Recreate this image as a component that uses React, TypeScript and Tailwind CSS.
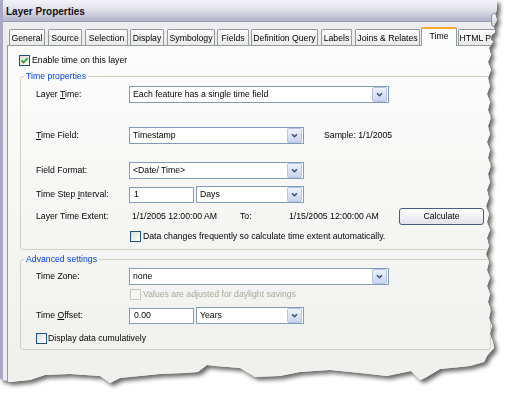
import clsx from "clsx";

const tabs = [
  { label: "General", cls: "ml-0 w-[36px]" },
  { label: "Source", cls: "ml-[3px] w-[34px]" },
  { label: "Selection", cls: "ml-[3px] w-[43px]" },
  { label: "Display", cls: "ml-[2px] w-[34px]" },
  { label: "Symbology", cls: "ml-[3px] w-[48px]" },
  { label: "Fields", cls: "ml-[2px] w-[32px]" },
  { label: "Definition Query", cls: "ml-[2px] w-[67px]" },
  { label: "Labels", cls: "ml-[3px] w-[31px]" },
  { label: "Joins & Relates", cls: "ml-[3px] w-[65px]" },
  { label: "Time", cls: "ml-px w-[36px]", active: true },
  { label: "HTML Popup", cls: "ml-px w-[54px]" },
];

function Chevron() {
  return (
    <span className="mr-px flex h-[15px] w-[15px] items-center justify-center rounded-[2px] border border-[#b5c3e3] bg-gradient-to-b from-[#eef2fc] to-[#c9d4ee]">
      <svg width="9" height="9" viewBox="0 0 9 9">
        <path d="M2 3.2 L4.5 5.7 L7 3.2" stroke="#3f4f70" strokeWidth="1.6" fill="none" />
      </svg>
    </span>
  );
}

function Select({ value, w }: { value: string; w: string }) {
  return (
    <div className={clsx("flex h-[17px] shrink-0 items-center border border-[#7f9db9] bg-white", w)}>
      <span className="flex-1 truncate pl-[3px]">{value}</span>
      <Chevron />
    </div>
  );
}

function Input({ value }: { value: string }) {
  return (
    <div className="flex h-[16px] w-[65px] shrink-0 items-center border border-[#7f9db9] bg-white pl-[4px]">
      {value}
    </div>
  );
}

function Check({ checked, disabled }: { checked?: boolean; disabled?: boolean }) {
  return (
    <span
      className={clsx(
        "flex h-[11px] w-[11px] shrink-0 items-center justify-center border",
        disabled ? "border-[#c9c7ba] bg-[#f7f7f4]" : "border-[#1c5180] bg-gradient-to-br from-[#dcdcd7] to-white"
      )}
    >
      {checked && (
        <svg width="9" height="9" viewBox="0 0 9 9">
          <path d="M1.6 4.4 L3.6 6.5 L7.6 2.2" stroke="#21a121" strokeWidth="1.7" fill="none" />
        </svg>
      )}
    </span>
  );
}

function Label({ children }: { children: React.ReactNode }) {
  return <span className="w-[93px] shrink-0">{children}</span>;
}

function U({ children }: { children: React.ReactNode }) {
  return <span className="underline underline-offset-[1px]">{children}</span>;
}

function Group({ title, className, children }: { title: string; className?: string; children: React.ReactNode }) {
  return (
    <fieldset className={clsx("ml-[12px] w-[471px] rounded-[3px] border border-[#d0d0bf]", className)}>
      <legend className="ml-[3px] h-[11px] px-[2px] leading-[11px] text-[#0046d5]">{title}</legend>
      <div className="pl-[15px]">{children}</div>
    </fieldset>
  );
}

export default function App() {
  return (
    <div className="h-[395px] w-[509px] overflow-hidden bg-white font-['Liberation_Sans',Arial,sans-serif] text-[8.7px] leading-none text-black">
      <div className="[filter:drop-shadow(3px_3px_2px_rgba(0,0,0,0.6))]">
        <div className="relative flex h-[392px] w-[505px] flex-col border-l-[3px] border-[#a9a9c5] bg-[#ededf0] [clip-path:polygon(0_0,497px_0,497px_10px,495px_14px,497px_20px,494px_26px,495px_32px,491px_36px,493px_42px,489px_48px,491px_55px,488px_62px,491px_70px,488px_78px,490px_86px,487px_94px,490px_102px,488px_110px,491px_118px,488px_126px,490px_134px,487px_142px,490px_150px,488px_158px,491px_166px,488px_174px,490px_182px,487px_190px,489px_198px,486px_206px,489px_214px,487px_222px,490px_230px,487px_238px,489px_246px,486px_254px,489px_262px,487px_270px,490px_278px,487px_286px,490px_294px,488px_302px,491px_310px,489px_318px,492px_326px,490px_334px,493px_342px,494px_348px,487px_356px,484px_362px,470px_366px,461px_367px,440px_369px,425px_378px,420px_380px,411px_371px,387px_376px,360px_373px,330px_370px,300px_372px,280px_376px,255px_377px,240px_368px,215px_366px,207px_365px,198px_372px,185px_373px,160px_374px,140px_376px,120px_378px,110px_383px,100px_376px,70px_374px,45px_375px,30px_380px,10px_382px,0_379px)]">
          <div className="flex h-[22px] shrink-0 items-center rounded-tl-[3px] border-b border-[#9c9cb6] bg-gradient-to-b from-[#f3f3f8] via-[#dedee8] to-[#b3b3c9] pl-[3px] pt-[3px] text-[10px] font-bold text-[#111]">
            Layer Properties
          </div>
          <div className="absolute left-[488px] top-[13px] h-[14px] w-[12px] rounded-[3px] border border-[#8d8daa] bg-gradient-to-b from-[#f6f6fa] to-[#cfcfdc]" />
          <div className="flex flex-1 flex-col pl-[4px] pt-[5px]">
            <div className="ml-[2px] flex h-[18px] items-end">
              {tabs.map((t) => (
                <div
                  key={t.label}
                  className={clsx(
                    "flex shrink-0 items-center justify-center overflow-hidden whitespace-nowrap rounded-t-[2px] border-x border-[#919b9c]",
                    t.cls,
                    t.active
                      ? "relative z-10 -mb-px h-[19px] border-t-[2px] border-t-[#f4a93a] bg-[#fcfcfe] pb-[2px]"
                      : "h-[16px] border-t bg-gradient-to-b from-white to-[#e9e9e6] pt-px"
                  )}
                >
                  {t.label}
                </div>
              ))}
            </div>
            <div className="flex flex-1 flex-col border-l border-t border-[#919b9c] bg-gradient-to-b from-[#fcfcfc] to-[#efefec]">
              <div className="ml-[11px] mt-[9px] flex h-[11px] items-center gap-[2px]">
                <Check checked />
                <span>Enable time on this layer</span>
              </div>

              <Group title="Time properties" className="mt-[5px] pb-[7px]">
                <div className="mt-[4px] flex h-[17px] items-center">
                  <Label>
                    Layer <U>T</U>ime:
                  </Label>
                  <Select value="Each feature has a single time field" w="w-[260px]" />
                </div>
                <div className="mt-[24px] flex h-[17px] items-center">
                  <Label>
                    <U>T</U>ime Field:
                  </Label>
                  <Select value="Timestamp" w="w-[175px]" />
                  <span className="ml-[20px]">Sample: 1/1/2005</span>
                </div>
                <div className="mt-[18px] flex h-[17px] items-center">
                  <Label>Field Format:</Label>
                  <Select value="<Date/ Time>" w="w-[175px]" />
                </div>
                <div className="mt-[7px] flex h-[17px] items-center">
                  <Label>
                    Time Step <U>I</U>nterval:
                  </Label>
                  <Input value="1" />
                  <span className="ml-[2px]">
                    <Select value="Days" w="w-[108px]" />
                  </span>
                </div>
                <div className="mt-[5px] flex h-[17px] items-center">
                  <Label>Layer Time Extent:</Label>
                  <span className="w-[111px] pl-[3px]">1/1/2005 12:00:00 AM</span>
                  <span className="w-[49px]">To:</span>
                  <span className="w-[110px]">1/15/2005 12:00:00 AM</span>
                  <button className="flex h-[17px] w-[85px] items-center justify-center rounded-[3px] border border-[#4b5b7e] bg-gradient-to-b from-white to-[#e2e2ea]">
                    Calculate
                  </button>
                </div>
                <div className="ml-[94px] mt-[6px] flex h-[11px] items-center gap-[2px]">
                  <Check />
                  <span>Data changes frequently so calculate time extent automatically.</span>
                </div>
              </Group>

              <Group title="Advanced settings" className="mt-[4px] pb-[5px]">
                <div className="mt-[3px] flex h-[17px] items-center">
                  <Label>Time Zone:</Label>
                  <Select value="none" w="w-[260px]" />
                </div>
                <div className="ml-[94px] mt-[4px] flex h-[11px] items-center gap-[2px] text-[#aca899]">
                  <Check disabled />
                  <span>Values are adjusted for daylight savings</span>
                </div>
                <div className="mt-[7px] flex h-[17px] items-center">
                  <Label>
                    Time <U>O</U>ffset:
                  </Label>
                  <Input value="0.00" />
                  <span className="ml-[2px]">
                    <Select value="Years" w="w-[108px]" />
                  </span>
                </div>
                <div className="mt-[9px] flex h-[11px] items-center gap-[1px]">
                  <Check />
                  <span>Display data cumulatively</span>
                </div>
              </Group>
            </div>
          </div>
        </div>
      </div>
    </div>
  );
}
